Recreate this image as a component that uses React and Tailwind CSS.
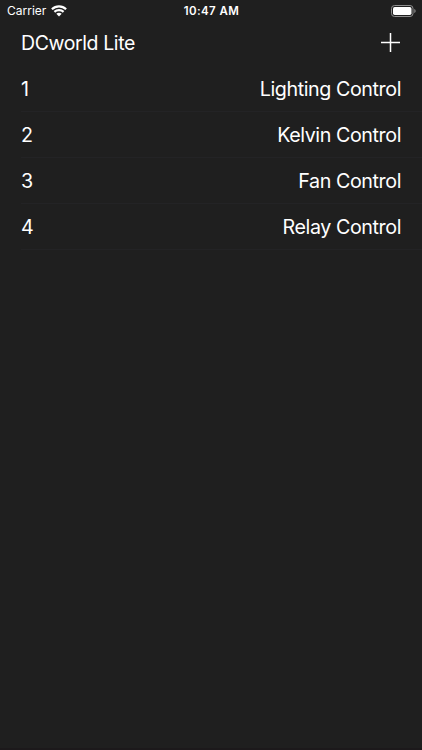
import { useState } from "react";

const controls = [
  { id: 1, name: "Lighting Control" },
  { id: 2, name: "Kelvin Control" },
  { id: 3, name: "Fan Control" },
  { id: 4, name: "Relay Control" },
];

function StatusBar() {
  return (
    <div className="grid h-[22px] grid-cols-3 items-center pl-[7px] pr-[6px]">
      <div className="flex items-center gap-[5px]">
        <span className="text-[12px] leading-[22px]">Carrier</span>
        <svg width="16" height="12" viewBox="0 0 16 12" fill="none" stroke="white" strokeWidth="2.2">
          <path d="M.9 4.3C4.9.5 11.1.5 15.1 4.3" />
          <path d="M3.4 6.9C6 4.6 10 4.6 12.6 6.9" />
          <path d="M5.3 8.8C6.9 7.5 9.1 7.5 10.7 8.8L8 11.5Z" fill="white" stroke="none" />
        </svg>
      </div>
      <span className="text-center text-[11.5px] leading-[22px] font-semibold tracking-[0.4px]">10:47 AM</span>
      <svg className="justify-self-end" width="25" height="12" viewBox="0 0 25 12" fill="none">
        <rect x=".5" y=".5" width="21.5" height="11" rx="3" stroke="#8e8e8e" />
        <rect x="2" y="2" width="18.5" height="8" rx="1.7" fill="white" />
        <path d="M23.3 4v4c.8-.3 1.3-1.1 1.3-2s-.5-1.7-1.3-2Z" fill="#8e8e8e" />
      </svg>
    </div>
  );
}

export default function App() {
  const [selected, setSelected] = useState(null);

  return (
    <div className="flex h-screen w-full flex-col border-b-2 border-[#1c191b] bg-[#1f1f1f] font-['Inter','Liberation_Sans',sans-serif] text-white">
      <StatusBar />

      {/* Title and add button */}
      <header className="flex h-[44px] items-center justify-between pl-[21px] pr-[22px] pb-[3px]">
        <h1 className="pt-[2px] text-[19.5px] tracking-[-0.4px]">DCworld Lite</h1>
        <button aria-label="Add">
          <svg width="19" height="19" viewBox="0 0 19 19" stroke="white" strokeWidth="1.5">
            <path d="M9.5 0v19M0 9.5h19" />
          </svg>
        </button>
      </header>

      <ul>
        {controls.map((item) => (
          <li key={item.id} className="ml-[21px] border-b border-[#232325]">
            <button
              onClick={() => setSelected(item.id)}
              aria-pressed={selected === item.id}
              className="flex h-[45px] w-full items-center justify-between pt-[2px] pr-[21px] text-[19.7px] tracking-[-0.42px]"
            >
              <span>{item.id}</span>
              <span>{item.name}</span>
            </button>
          </li>
        ))}
      </ul>
    </div>
  );
}
